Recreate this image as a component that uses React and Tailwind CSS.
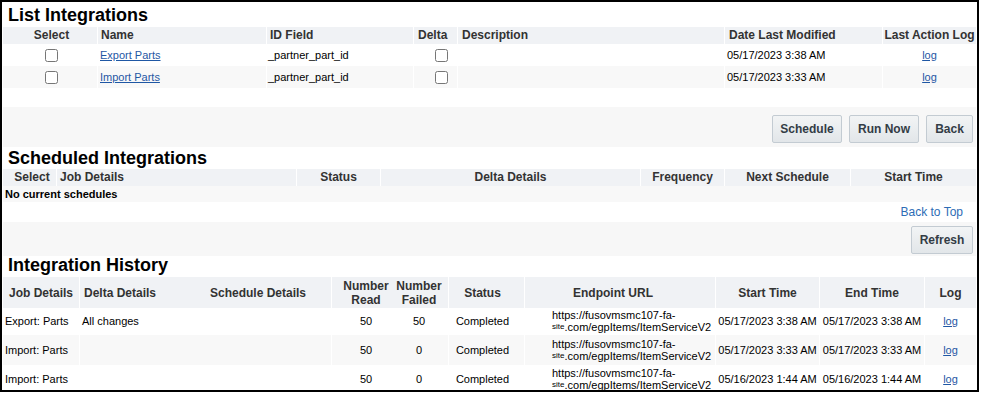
import React from 'react'

const integrations = [
  { name: 'Export Parts', idField: '_partner_part_id', date: '05/17/2023 3:38 AM', bg: 'bg-white' },
  { name: 'Import Parts', idField: '_partner_part_id', date: '05/17/2023 3:33 AM', bg: 'bg-[#f8f8f8]' },
]

const history = [
  { job: 'Export: Parts', delta: 'All changes', read: 50, failed: 50, start: '05/17/2023 3:38 AM', end: '05/17/2023 3:38 AM', row: 'h-[27px] bg-white' },
  { job: 'Import: Parts', delta: '', read: 50, failed: 0, start: '05/17/2023 3:33 AM', end: '05/17/2023 3:33 AM', row: 'h-[30px] bg-[#f8f8f8]' },
  { job: 'Import: Parts', delta: '', read: 50, failed: 0, start: '05/16/2023 1:44 AM', end: '05/16/2023 1:44 AM', row: 'h-[28px] bg-white' },
]

const listGrid = 'grid grid-cols-[95px_169px_147px_44px_267px_158px_93px]'
const schedGrid = 'grid grid-cols-[54px_240px_84px_260px_84px_126px_125px]'
const histGrid = 'grid grid-cols-[77px_105px_147px_58px_59px_76px_191px_104px_105px_51px]'

function Title({ children, className }) {
  return <div className={`pl-[5px] text-[18px] font-bold text-black ${className}`}>{children}</div>
}

function Btn({ children, w }) {
  return (
    <button className={`${w} h-[28px] rounded-[2px] border border-[#c3cbd2] bg-linear-to-b from-[#f2f4f5] to-[#e2e6e9] text-[12px] font-bold text-[#333c45]`}>
      {children}
    </button>
  )
}

export default function App() {
  return (
    <div className="w-[982px] h-[394px] bg-white font-['Liberation_Sans',Arial,sans-serif]">
      <div className="w-[979px] h-[392px] border-2 border-black overflow-hidden px-[1px]">

        {/* List Integrations */}
        <Title className="h-[25px] leading-[26px]">List Integrations</Title>
        <div className={`${listGrid} h-[17px] bg-[#f0f2f5] text-[12px] font-bold leading-[17px] text-[#333]`}>
          <div className="border-r border-white text-center pl-[3px]">Select</div>
          <div className="border-r border-white pl-[3px]">Name</div>
          <div className="border-r border-white pl-[3px]">ID Field</div>
          <div className="border-r border-white pl-[4px]">Delta</div>
          <div className="border-r border-white pl-[4px]">Description</div>
          <div className="border-r border-white pl-[4px]">Date Last Modified</div>
          <div className="text-center">Last Action Log</div>
        </div>
        {integrations.map(it => (
          <div key={it.name} className={`${listGrid} h-[22px] ${it.bg} text-[11px] text-black items-center`}>
            <div className="h-full border-r border-white flex items-center pl-[42px]">
              <input type="checkbox" className="w-[13px] h-[13px] m-0" />
            </div>
            <div className="h-full border-r border-white flex items-center pl-[2px]">
              <a href="#" className="text-[#1f57a4] underline">{it.name}</a>
            </div>
            <div className="h-full border-r border-white flex items-center pl-[1px]">{it.idField}</div>
            <div className="h-full border-r border-white flex items-center pl-[21px]">
              <input type="checkbox" className="w-[13px] h-[13px] m-0" />
            </div>
            <div className="h-full border-r border-white"></div>
            <div className="h-full border-r border-white flex items-center pl-[2px]">{it.date}</div>
            <div className="h-full flex items-center justify-center">
              <a href="#" className="text-[#1f57a4] underline">log</a>
            </div>
          </div>
        ))}
        <div className="h-[19px]"></div>

        {/* actions */}
        <div className="h-[40px] bg-[#f7f7f7] flex justify-end items-start gap-[7px] pt-[8px] pr-[3px]">
          <Btn w="w-[70px]">Schedule</Btn>
          <Btn w="w-[70px]">Run Now</Btn>
          <Btn w="w-[47px]">Back</Btn>
        </div>

        {/* Scheduled Integrations */}
        <Title className="h-[22px] leading-[22px]">Scheduled Integrations</Title>
        <div className={`${schedGrid} h-[17px] bg-[#f0f2f5] text-[12px] font-bold leading-[17px] text-[#333] text-center`}>
          <div className="border-r border-white pl-[5px]">Select</div>
          <div className="border-r border-white pl-[3px] text-left">Job Details</div>
          <div className="border-r border-white">Status</div>
          <div className="border-r border-white">Delta Details</div>
          <div className="border-r border-white">Frequency</div>
          <div className="border-r border-white">Next Schedule</div>
          <div>Start Time</div>
        </div>
        <div className="h-[16px] bg-[#f8f8f8] pl-[2px] text-[11px] font-bold leading-[16px] text-black">No current schedules</div>
        <div className="h-[20px] flex justify-end pr-[13px]">
          <a href="#" className="text-[12px] leading-[20px] text-[#2d6cb5]">Back to Top</a>
        </div>
        <div className="h-[34px] bg-[#f7f7f7] flex justify-end items-start pt-[4px] pr-[3px]">
          <Btn w="w-[62px]">Refresh</Btn>
        </div>

        {/* Integration History */}
        <Title className="h-[21px] leading-[19px]">Integration History</Title>
        <div className={`${histGrid} h-[31px] bg-[#f0f2f5] text-[12px] font-bold leading-[14px] text-[#333] text-center`}>
          <div className="border-r border-white flex items-center justify-center">Job Details</div>
          <div className="flex items-center pl-[4px]">Delta Details</div>
          <div className="border-r border-white flex items-center justify-center">Schedule Details</div>
          <div className="flex items-center justify-center pl-[10px]">Number<br />Read</div>
          <div className="border-r border-white flex items-center justify-center">Number<br />Failed</div>
          <div className="border-r border-white flex items-center justify-center pr-[8px]">Status</div>
          <div className="border-r border-white flex items-center justify-center pr-[14px]">Endpoint URL</div>
          <div className="border-r border-white flex items-center justify-center">Start Time</div>
          <div className="border-r border-white flex items-center justify-center">End Time</div>
          <div className="flex items-center justify-center">Log</div>
        </div>
        {history.map((h, i) => (
          <div key={i} className={`${histGrid} ${h.row} text-[11px] text-black`}>
            <div className="border-r border-white flex items-center pl-[2px]">{h.job}</div>
            <div className="flex items-center pl-[2px]">{h.delta}</div>
            <div className="border-r border-white"></div>
            <div className="flex items-center justify-center pl-[10px]">{h.read}</div>
            <div className="border-r border-white flex items-center justify-center">{h.failed}</div>
            <div className="border-r border-white flex items-center justify-center pr-[8px]">Completed</div>
            <div className="border-r border-white flex flex-col justify-center pl-[27px] leading-[11px] whitespace-nowrap">
              <span>https://fusovmsmc107-fa-</span>
              <span><span className="text-[8px] align-[2px]">site</span>.com/egpItems/ItemServiceV2</span>
            </div>
            <div className="border-r border-white flex items-center justify-center">{h.start}</div>
            <div className="border-r border-white flex items-center justify-center">{h.end}</div>
            <div className="flex items-center justify-center">
              <a href="#" className="text-[#1f57a4] underline">log</a>
            </div>
          </div>
        ))}
      </div>
    </div>
  )
}
